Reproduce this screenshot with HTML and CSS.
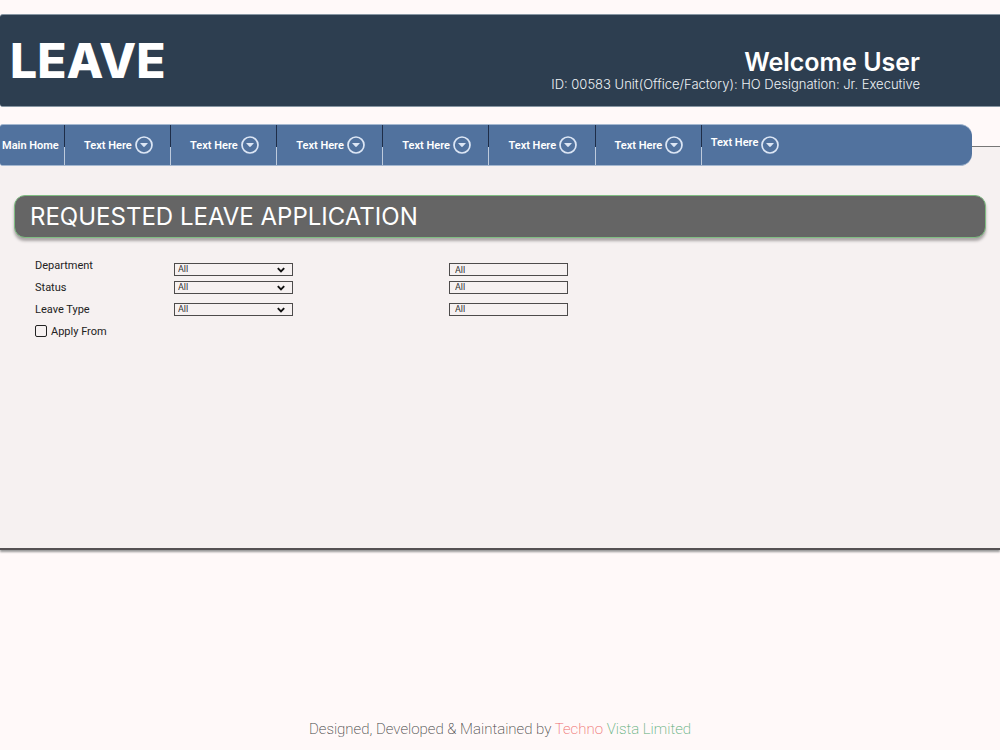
FILE: index.html
```html
<!DOCTYPE html>
<html lang="en">
<head>
<meta charset="utf-8">
<meta name="viewport" content="width=device-width, initial-scale=1">
<title>Leave</title>
<link rel="stylesheet" href="styles.css">
</head>
<body>
<svg class="sprite" aria-hidden="true">
  <symbol id="drop" viewBox="0 0 18 18"><circle cx="9" cy="9" r="8" fill="none" stroke="currentColor" stroke-width="1.7"/><path d="M5 7h8l-3.2 3.6q-.8.8-1.6 0z" fill="currentColor"/></symbol>
  <symbol id="chevron" viewBox="0 0 8 6"><path d="M.8 1.2 4 4.5 7.2 1.2" fill="none" stroke="currentColor" stroke-width="1.9"/></symbol>
</svg>
<header class="header">
  <h1 class="title">LEAVE</h1>
  <div class="user">
    <p class="welcome">Welcome User</p>
    <p class="details">ID: 00583 Unit(Office/Factory): HO Designation: Jr. Executive</p>
  </div>
</header>
<nav class="nav">
  <a class="nav-home" href="#">Main Home</a>
  <button class="nav-item" type="button">Text Here<svg class="drop"><use href="#drop"/></svg></button>
  <button class="nav-item" type="button">Text Here<svg class="drop"><use href="#drop"/></svg></button>
  <button class="nav-item" type="button">Text Here<svg class="drop"><use href="#drop"/></svg></button>
  <button class="nav-item" type="button">Text Here<svg class="drop"><use href="#drop"/></svg></button>
  <button class="nav-item" type="button">Text Here<svg class="drop"><use href="#drop"/></svg></button>
  <button class="nav-item" type="button">Text Here<svg class="drop"><use href="#drop"/></svg></button>
  <button class="nav-item nav-last" type="button"><span class="nav-text">Text Here</span><svg class="drop"><use href="#drop"/></svg></button>
</nav>
<main class="content">
  <h2 class="heading">REQUESTED LEAVE APPLICATION</h2>
  <form class="filters">
    <label class="label" for="department">Department</label>
    <span class="picker picker-first"><select class="field" id="department"><option>All</option></select><svg class="chevron"><use href="#chevron"/></svg></span>
    <input class="field text-field picker-first" type="text" value="All" aria-label="Department filter">
    <label class="label" for="status">Status</label>
    <span class="picker"><select class="field" id="status"><option>All</option></select><svg class="chevron"><use href="#chevron"/></svg></span>
    <input class="field text-field" type="text" value="All" aria-label="Status filter">
    <label class="label" for="type">Leave Type</label>
    <span class="picker"><select class="field" id="type"><option>All</option></select><svg class="chevron"><use href="#chevron"/></svg></span>
    <input class="field text-field" type="text" value="All" aria-label="Leave type filter">
    <label class="label apply"><input class="check" type="checkbox">Apply From</label>
  </form>
</main>
<footer class="footer">Designed, Developed &amp; Maintained by <span class="techno">Techno</span> <span class="vista">Vista Limited</span></footer>
</body>
</html>
```
FILE: styles.css
```css
* { box-sizing: border-box; }
body {
  margin: 0;
  padding-top: 14px;
  min-height: 100vh;
  display: flex;
  flex-direction: column;
  background: #fff9f9;
  font-family: Roboto, sans-serif;
}
h1, h2, p { margin: 0; }
.sprite { display: none; }
.header {
  display: flex;
  justify-content: space-between;
  padding: 15px 80px 14px 10px;
  background: #2d3e50;
  border: solid #8796a3;
  border-width: 1px 0;
  border-radius: 3px 0 0 3px;
  color: #fff;
  font-family: Inter, sans-serif;
}
.title { font-size: 48px; line-height: 62px; font-weight: 800; }
.user { padding-top: 17px; text-align: right; }
.welcome { font-size: 25px; line-height: 30px; font-weight: 600; }
.details { font-size: 13px; line-height: 15px; font-weight: 300; color: #eef2f5; }
.nav {
  display: grid;
  grid-template-columns: 65px repeat(6, 106fr) 270fr;
  height: 42px;
  margin: 17px 28px 0 0;
  z-index: 1;
  background: #51729e;
  border: solid #a5b8d0;
  border-width: 1px 0;
  border-radius: 3px 12px 12px 3px;
}
.nav-home, .nav-item {
  display: flex;
  align-items: center;
  border: 0;
  padding: 0 0 0 2px;
  background: linear-gradient(#1e2d48 55%, #bdcadc 55%) right / 1px 100% no-repeat;
  color: #fff;
  font: 600 11px Roboto, sans-serif;
  text-decoration: none;
  white-space: nowrap;
}
.nav-item { padding: 0 0 0 19px; gap: 3px; }
.nav-last { padding-left: 9px; background: none; }
.nav-text { padding-bottom: 5px; }
.drop { width: 18px; height: 18px; color: #dce6f5; }
.content {
  min-height: 404px;
  margin-top: -20px;
  padding: 48px 14px 0;
  background: #f6f1f1;
  border-top: 1px solid #777;
  border-bottom: 2px solid #555153;
  box-shadow: 0 2px 2px #999;
}
.heading {
  padding: 0 15px;
  background: #656565;
  border: 1px solid #7fbd82;
  border-radius: 11px;
  box-shadow: 0 3px 3px #aaa6a6;
  color: #fff;
  font: 400 24px/41px Inter, sans-serif;
}
.filters {
  display: grid;
  grid-template-columns: 139px 275px 119px;
  grid-auto-rows: 22px;
  align-items: center;
  padding: 16px 21px 0;
}
.label { font-size: 11px; color: #222; }
.picker { position: relative; width: 119px; height: 13px; }
.picker-first { align-self: end; }
.field {
  display: block;
  width: 119px;
  height: 13px;
  margin: 0;
  padding: 0 3px;
  appearance: none;
  background: transparent;
  border: 1px solid #4d4b4b;
  border-radius: 0;
  color: #333;
  font: 9px/11px Roboto, sans-serif;
}
.text-field { padding: 0 5px; }
.chevron {
  position: absolute;
  right: 8px;
  top: 4px;
  width: 8px;
  height: 6px;
  color: #111;
  pointer-events: none;
}
.apply { display: flex; align-items: center; gap: 4px; }
.check {
  appearance: none;
  width: 12px;
  height: 12px;
  margin: 0;
  border: 1px solid #222;
  border-radius: 2px;
}
.check:checked { background: #51729e; }
.footer {
  margin-top: auto;
  padding: 10px 0 11px;
  text-align: center;
  color: #444;
  font-size: 15px;
  line-height: 20px;
  font-weight: 200;
}
.techno { color: #ee6c6c; }
.vista { color: #58ad77; }
```
